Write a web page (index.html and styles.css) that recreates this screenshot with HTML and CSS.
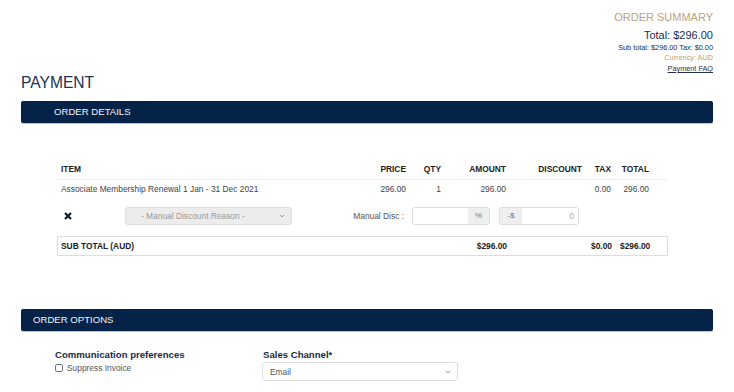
FILE: index.html
```html
<!DOCTYPE html>
<html lang="en">
<head>
    <meta charset="UTF-8">
    <meta name="viewport" content="width=device-width, initial-scale=1.0">
    <title>Payment</title>
    <link rel="stylesheet" href="styles.css">
</head>
<body>
    <div class="page">
        <!-- 주문 요약 -->
        <div class="summary">
            <div class="summary-title">ORDER SUMMARY</div>
            <div class="summary-total">Total: $296.00</div>
            <div class="summary-sub">Sub total: $296.00 Tax: $0.00</div>
            <div class="summary-currency">Currency: AUD</div>
            <a class="summary-faq" href="#">Payment FAQ</a>
        </div>

        <h1 class="page-title">PAYMENT</h1>

        <div class="section-bar details-bar">ORDER DETAILS</div>
        <div class="details">
            <div class="row head">
                <div>ITEM</div>
                <div class="num">PRICE</div>
                <div class="num">QTY</div>
                <div class="num">AMOUNT</div>
                <div class="num">DISCOUNT</div>
                <div class="num">TAX</div>
                <div class="num">TOTAL</div>
                <div></div>
            </div>
            <div class="row item">
                <div>Associate Membership Renewal 1 Jan - 31 Dec 2021</div>
                <div class="num">296.00</div>
                <div class="num">1</div>
                <div class="num">296.00</div>
                <div class="num"></div>
                <div class="num">0.00</div>
                <div class="num">296.00</div>
                <div></div>
            </div>
            <div class="disc-row">
                <svg class="remove" width="8" height="8" viewBox="0 0 8 8">
                    <path d="M1 1 L7 7 M7 1 L1 7" stroke="#0d1b33" stroke-width="2.2" stroke-linecap="butt"/>
                </svg>
                <div class="fake-select disabled">
                    <span>- Manual Discount Reason -</span>
                    <svg width="6" height="4" viewBox="0 0 6 4"><path d="M0.8 0.8 L3 3 L5.2 0.8" fill="none" stroke="#999" stroke-width="1"/></svg>
                </div>
                <div class="disc-label">Manual Disc :</div>
                <div class="input-group pct">
                    <div class="field"></div>
                    <div class="addon">%</div>
                </div>
                <div class="input-group amt">
                    <div class="addon">-$</div>
                    <div class="field">0</div>
                </div>
            </div>
            <div class="row subtotal">
                <div>SUB TOTAL (AUD)</div>
                <div></div>
                <div></div>
                <div class="num">$296.00</div>
                <div></div>
                <div class="num">$0.00</div>
                <div class="num">$296.00</div>
                <div></div>
            </div>
        </div>

        <div class="section-bar options-bar">ORDER OPTIONS</div>
        <div class="options">
            <div class="opt-col comm">
                <div class="opt-label">Communication preferences</div>
                <label class="check"><span class="box"></span>Suppress Invoice</label>
            </div>
            <div class="opt-col channel">
                <div class="opt-label">Sales Channel*</div>
                <div class="fake-select">
                    <span>Email</span>
                    <svg width="6" height="4" viewBox="0 0 6 4"><path d="M0.8 0.8 L3 3 L5.2 0.8" fill="none" stroke="#999" stroke-width="1"/></svg>
                </div>
            </div>
        </div>
    </div>
</body>
</html>
```

FILE: styles.css
```css
*{margin: 0; padding: 0; box-sizing: border-box;}
body {
    font-family: "Liberation Sans", Arial, sans-serif;
    color: #444;
    background: #fff;
}
.page {
    padding: 11px 21px 0;
}

/* 주문 요약 */
.summary {
    text-align: right;
    display: flex;
    flex-direction: column;
    align-items: flex-end;
}
.summary-title {
    font-size: 11px;
    line-height: 13px;
    color: #b9a27f;
}
.summary-total {
    margin-top: 5px;
    font-size: 11px;
    line-height: 13px;
    color: #1c2e52;
}
.summary-sub {
    font-size: 7.3px;
    line-height: 10px;
    color: #1c2e52;
    margin-top: 1px;
}
.summary-currency {
    font-size: 7.3px;
    line-height: 10px;
    color: #b9a27f;
}
.summary-faq {
    font-size: 7.3px;
    line-height: 11px;
    color: #1c2e52;
    text-decoration: underline;
}

.page-title {
    font-size: 15.6px;
    font-weight: normal;
    line-height: 18px;
    color: #1c3256;
}

.section-bar {
    height: 22px;
    line-height: 22px;
    background-color: #052349;
    color: #f2f4f8;
    font-size: 9.6px;
    border-radius: 2px;
    box-shadow: 0 1px 1px rgba(0, 0, 0, 0.25);
}
.details-bar {
    margin-top: 9px;
    padding-left: 33px;
}
.options-bar {
    padding-left: 12px;
}

/* 주문 내역 */
.details {
    padding: 36px 45px 53px 36px;
}
.row {
    display: grid;
    grid-template-columns: 303px 50px 35px 65px 76px 29px 38px 15px;
    font-size: 8.4px;
    align-items: center;
}
.row > div {
    padding: 0 4px;
    white-space: nowrap;
}
.row .num {
    text-align: right;
}
.head {
    height: 21px;
    font-weight: bold;
    color: #222;
    border-bottom: 1px solid #eee;
}
.item {
    height: 17px;
    color: #444;
}
.subtotal {
    height: 20px;
    margin-top: 1px;
    font-weight: bold;
    color: #222;
    border: 1px solid #ddd;
}
.subtotal > div:first-child {
    padding-left: 3px;
}

.disc-row {
    height: 38px;
    display: flex;
    align-items: center;
    font-size: 8.4px;
}
.remove {
    margin-left: 7px;
    flex: none;
}
.fake-select {
    display: flex;
    align-items: center;
    justify-content: space-between;
    height: 19px;
    border: 1px solid #ddd;
    border-radius: 3px;
    padding: 0 6px 0 7px;
    font-size: 8.4px;
    color: #555;
    background: #fff;
}
.fake-select.disabled {
    margin-left: 53px;
    width: 167px;
    height: 18px;
    background: #ececec;
    color: #999;
    padding-left: 15px;
}
.disc-label {
    width: 112px;
    text-align: right;
    color: #555;
}
.input-group {
    display: flex;
    height: 18px;
    border: 1px solid #ddd;
    border-radius: 3px;
    overflow: hidden;
}
.input-group .field {
    flex: 1;
    background: #fff;
    text-align: right;
    padding-right: 4px;
    line-height: 16px;
    color: #aaa;
}
.input-group .addon {
    width: 21px;
    background: #eee;
    text-align: center;
    line-height: 16px;
    color: #777;
    font-size: 8px;
}
.pct {
    margin-left: 8px;
    width: 78px;
}
.amt {
    margin-left: 9px;
    width: 80px;
}
.amt .addon {
    width: 22px;
}

/* 주문 옵션 */
.options {
    display: flex;
    padding: 18px 0 0 34px;
}
.opt-label {
    font-size: 9.6px;
    line-height: 12px;
    font-weight: bold;
    color: #1d2b45;
}
.comm {
    width: 208px;
}
.check {
    display: flex;
    align-items: center;
    font-size: 8.4px;
    color: #555;
    margin-top: 2px;
    line-height: 10px;
}
.check .box {
    width: 8px;
    height: 8px;
    border: 1px solid #777;
    border-radius: 2px;
    margin-right: 4px;
}
.channel .fake-select {
    margin-top: 1px;
    width: 196px;
    margin-left: -1px;
}
```
